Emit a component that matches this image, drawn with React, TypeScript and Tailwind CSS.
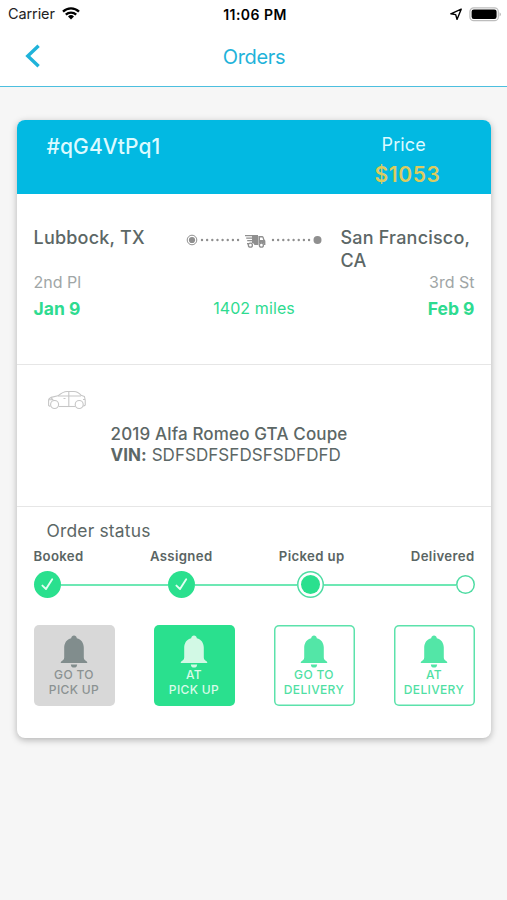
import React from "react";

const actions = [
  { lines: ["GO TO", "PICK UP"], box: "bg-[#d8d8d8] text-[#8b9292]", bell: "text-[#818d8d]" },
  { lines: ["AT", "PICK UP"], box: "bg-[#2ae08e] text-[#d8fbe9]", bell: "text-[#d2f9e5]" },
  { lines: ["GO TO", "DELIVERY"], box: "bg-white shadow-[inset_0_0_0_1.5px_#5ce2ab] text-[#50dfa4]", bell: "text-[#53e6a7]" },
  { lines: ["AT", "DELIVERY"], box: "bg-white shadow-[inset_0_0_0_1.5px_#5ce2ab] text-[#50dfa4]", bell: "text-[#53e6a7]" },
];

const StatusBar = () => (
  <div className="flex h-7 items-center justify-between pl-2 pr-[5px] text-black">
    <div className="flex w-[100px] items-center gap-[7px]">
      <span className="text-[14.5px] tracking-[-0.1px] text-[#222]">Carrier</span>
      <svg width="18" height="13" viewBox="0 0 18 13" className="-mt-[2px]">
        <g fill="none" stroke="currentColor" strokeWidth="2.3">
          <path d="M1 4.7 A11.5 11.5 0 0 1 17 4.7" />
          <path d="M3.8 7.7 A7.5 7.5 0 0 1 14.2 7.7" />
        </g>
        <path d="M6 9.5 A4.4 4.4 0 0 1 12 9.5 L9 12.6 Z" fill="currentColor" />
      </svg>
    </div>
    <span className="text-[14px] font-semibold tracking-[0.45px]">11:06 PM</span>
    <div className="flex w-[100px] items-center justify-end gap-[6px]">
      <svg width="14" height="13" viewBox="0 0 14 13">
        <path d="M12.2 1.2 L1.8 5.8 L6.7 6.6 L8 11.4 Z" fill="none" stroke="currentColor" strokeWidth="1.4" strokeLinejoin="round" />
      </svg>
      <svg width="33" height="15" viewBox="0 0 33 15">
        <rect x="0.9" y="0.9" width="28.4" height="12.8" rx="3.8" fill="none" stroke="#bdbdbd" strokeWidth="1.2" />
        <rect x="2.6" y="2.6" width="25" height="9.4" rx="2.2" fill="currentColor" />
        <path d="M30.6 5.2 Q33 7.3 30.6 9.4 Z" fill="#aaa" />
      </svg>
    </div>
  </div>
);

const NavBar = () => (
  <div className="flex h-[59px] items-center border-b border-[#4cbfdf] px-6 text-[#1fb3da]">
    <svg width="18" height="24" viewBox="0 0 18 24" className="-mt-[2px]">
      <path d="M14.6 1.8 L3.8 12 L14.6 22.2" fill="none" stroke="currentColor" strokeWidth="3.4" />
    </svg>
    <h1 className="-mt-[1px] flex-1 pr-[17px] text-center text-[20px] tracking-[-0.3px]">Orders</h1>
  </div>
);

const Route = () => (
  <svg width="138" height="18" viewBox="0 0 138 18" className="text-[#8f8f8f]">
    <circle cx="6" cy="9" r="4.8" fill="none" stroke="currentColor" strokeWidth="1" />
    <circle cx="6" cy="9" r="3.1" fill="currentColor" />
    <g stroke="currentColor" strokeWidth="2.4" strokeLinecap="round" strokeDasharray="0 5.15">
      <path d="M16 9 H53" />
      <path d="M87 9 H124" />
    </g>
    <g fill="currentColor">
      <path d="M66 4 H72 V14 H68.5 A3 3 0 0 0 62.8 13.6 L61 13.6 V12 H66 Z" />
      <path d="M72.4 5 H76 Q77.2 5 77.7 6.3 L78.4 8.5 Q79.4 9.1 79.4 10.5 V14 H78.2 A2.9 2.9 0 0 0 72.6 14 H72.4 Z M74 6.5 V8.9 H77.2 L76.4 6.5 Z" fillRule="evenodd" />
      <path d="M59 4 H66 V5.2 H59 Z M60.2 6.5 H66 V7.7 H60.2 Z M61.2 9 H66 V10.2 H61.2 Z" />
      <circle cx="131.5" cy="9" r="4" />
    </g>
    <g fill="white" stroke="currentColor" strokeWidth="1.3">
      <circle cx="64.4" cy="14.2" r="2" />
      <circle cx="75.4" cy="14.2" r="2" />
    </g>
  </svg>
);

const CarIcon = () => (
  <svg width="40" height="20" viewBox="0 0 40 20" fill="none" stroke="#c6c6c6" strokeWidth="1.1" strokeLinejoin="round">
    <path d="M3.3 16.5 L1.6 15.6 V9.8 Q1.7 8.4 4 7.4 L11 5.8 Q16 1.6 20 1.5 H27 Q31 1.6 34 5.2 L37.4 6.4 Q38.6 9.5 38.3 15 L36.3 16.2" />
    <path d="M11.7 16.5 H28" />
    <path d="M11 6 H34 M21.8 1.6 V16.2 M4 7.6 L6 9.8 H2 M38 9.5 H36 M16.5 8.5 H18.5" />
    <circle cx="7.6" cy="14.5" r="4" />
    <circle cx="32.2" cy="14.5" r="4" />
  </svg>
);

const Bell = ({ className }: { className: string }) => (
  <svg width="28" height="33" viewBox="0 0 28 33" fill="currentColor" className={className}>
    <path d="M14 0.6 C15.5 0.6 16.6 1.6 16.8 3.2 C21.3 4.4 23.8 7.8 23.8 12.8 V22.6 C23.8 24.6 25 25.4 26.5 26.3 Q27.3 26.9 27.3 28 H0.7 Q0.7 26.9 1.5 26.3 C3 25.4 4.2 24.6 4.2 22.6 V12.8 C4.2 7.8 6.7 4.4 11.2 3.2 C11.4 1.6 12.5 0.6 14 0.6 Z" />
    <path d="M10.8 29.4 H17.2 Q16.8 32.6 14 32.6 Q11.2 32.6 10.8 29.4 Z" />
  </svg>
);

const DoneDot = () => (
  <div className="flex size-[27px] shrink-0 items-center justify-center rounded-full bg-[#2ae08e]">
    <svg width="15" height="15" viewBox="0 0 15 15" fill="none" stroke="#e2fff2" strokeWidth="1.9" strokeLinecap="round" strokeLinejoin="round">
      <path d="M2.4 8.6 L6 12 L12.2 2.2" />
    </svg>
  </div>
);

const OrderStatus = () => (
  <div className="pl-[17px] pr-4 pt-3">
    <h2 className="pl-[13px] text-[17.4px] leading-6 tracking-[0.2px] text-[#5c6766]">Order status</h2>
    <div className="mt-[3px] flex justify-between text-[13.2px] font-semibold leading-5 tracking-[0.35px] text-[#5a6564]">
      <span>Booked</span>
      <span>Assigned</span>
      <span>Picked up</span>
      <span>Delivered</span>
    </div>
    <div className="mt-[5px] flex items-center">
      <DoneDot />
      <div className="h-[2px] w-[107px] bg-[#6de8b4]" />
      <DoneDot />
      <div className="h-[2px] w-[102px] bg-[#6de8b4]" />
      <div className="flex size-[27px] shrink-0 items-center justify-center rounded-full shadow-[inset_0_0_0_1.5px_#4fdca3]">
        <div className="size-[19px] rounded-full bg-[#2ae08e]" />
      </div>
      <div className="h-[2px] flex-1 bg-[#6de8b4]" />
      <div className="size-[19px] rounded-full shadow-[inset_0_0_0_1.5px_#4fdca3]" />
    </div>
    <div className="mt-[27px] flex justify-between">
      {actions.map((action) => (
        <button
          key={action.lines.join(" ")}
          className={`flex size-[81px] flex-col items-center rounded-[5px] pt-[10px] text-[12px] font-medium leading-[14.5px] tracking-[0.35px] ${action.box}`}
        >
          <Bell className={action.bell} />
          {action.lines.map((line) => (
            <span key={line}>{line}</span>
          ))}
        </button>
      ))}
    </div>
  </div>
);

export default function App() {
  return (
    <div className="h-[900px] w-[507px] overflow-hidden bg-[#f6f6f6] font-['Inter',sans-serif]">
      <header className="bg-white">
        <StatusBar />
        <NavBar />
      </header>

      <main className="mx-auto mt-[33px] h-[618px] w-[474px] overflow-hidden rounded-[8px] bg-white shadow-[0_2px_7px_rgba(0,0,0,0.28)]">
        <div className="flex h-[74px] justify-between bg-[#02b9e2] pl-[30px] pr-[50px] text-[#dcfaff]">
          <span className="mt-[13px] text-[21px] font-medium leading-7 tracking-[0.1px]">#qG4VtPq1</span>
          <div className="mt-3 flex flex-col">
            <span className="pl-[7px] text-[18px] leading-[26px] tracking-[0.1px]">Price</span>
            <span className="mt-1 text-[21px] font-semibold leading-[26px] tracking-[0.6px] text-[#dccb5e]">$1053</span>
          </div>
        </div>

        <div className="h-[171px] border-b border-[#e6e6e6] pl-[17px] pr-4 pt-[33px]">
          <div className="flex h-[44px] justify-between text-[18px] font-medium leading-[22.5px] tracking-[0.2px] text-[#5c6766]">
            <span className="w-[152px]">Lubbock, TX</span>
            <div className="flex-1 pt-[4px]">
              <Route />
            </div>
            <span className="w-[134px]">San Francisco, CA</span>
          </div>
          <div className="flex justify-between text-[16px] leading-[22px] text-[#a0a6a6]">
            <span>2nd Pl</span>
            <span>3rd St</span>
          </div>
          <div className="mt-[5px] flex justify-between text-[17.5px] font-bold leading-[22px] text-[#2edb90]">
            <span className="w-[60px]">Jan 9</span>
            <span className="-mt-px text-[16px] font-normal tracking-[0.1px]">1402 miles</span>
            <span className="w-[60px] text-right">Feb 9</span>
          </div>
        </div>

        <div className="h-[142px] border-b border-[#e6e6e6] pl-[30px] pt-[25px]">
          <CarIcon />
          <div className="ml-[64px] mt-[14px] text-[17px] leading-[21px] text-[#5c6766]">
            <p className="font-medium tracking-[0.15px]">2019 Alfa Romeo GTA Coupe</p>
            <p className="tracking-[0.05px]">
              <b>VIN:</b> SDFSDFSFDSFSDFDFD
            </p>
          </div>
        </div>

        <OrderStatus />
      </main>
    </div>
  );
}
